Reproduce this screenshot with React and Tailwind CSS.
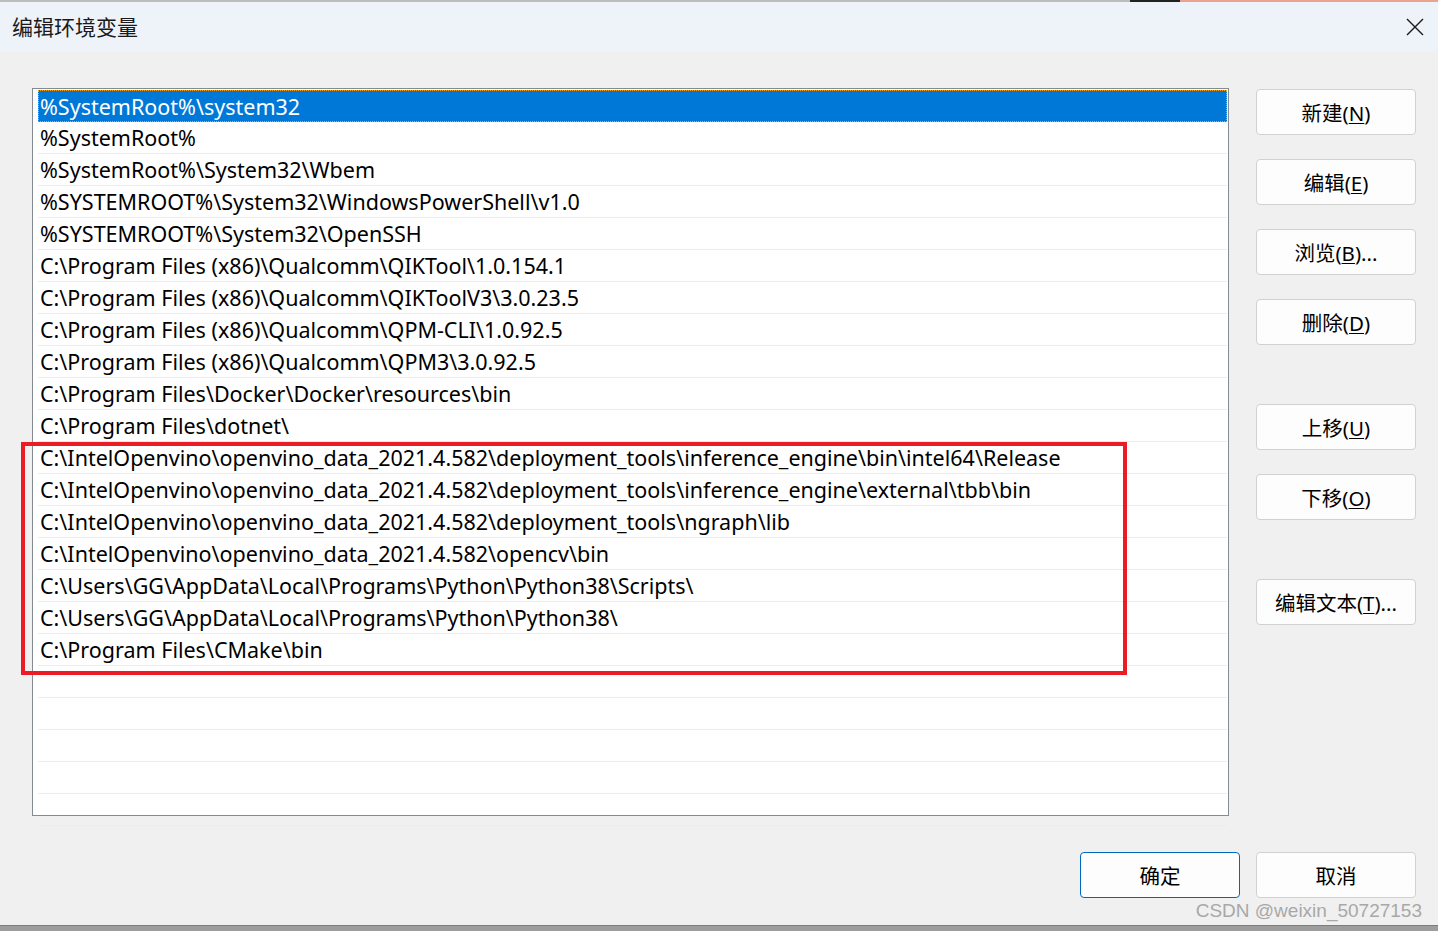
import React from 'react'

const paths = [
  '%SystemRoot%\\system32',
  '%SystemRoot%',
  '%SystemRoot%\\System32\\Wbem',
  '%SYSTEMROOT%\\System32\\WindowsPowerShell\\v1.0',
  '%SYSTEMROOT%\\System32\\OpenSSH',
  'C:\\Program Files (x86)\\Qualcomm\\QIKTool\\1.0.154.1',
  'C:\\Program Files (x86)\\Qualcomm\\QIKToolV3\\3.0.23.5',
  'C:\\Program Files (x86)\\Qualcomm\\QPM-CLI\\1.0.92.5',
  'C:\\Program Files (x86)\\Qualcomm\\QPM3\\3.0.92.5',
  'C:\\Program Files\\Docker\\Docker\\resources\\bin',
  'C:\\Program Files\\dotnet\\',
  'C:\\IntelOpenvino\\openvino_data_2021.4.582\\deployment_tools\\inference_engine\\bin\\intel64\\Release',
  'C:\\IntelOpenvino\\openvino_data_2021.4.582\\deployment_tools\\inference_engine\\external\\tbb\\bin',
  'C:\\IntelOpenvino\\openvino_data_2021.4.582\\deployment_tools\\ngraph\\lib',
  'C:\\IntelOpenvino\\openvino_data_2021.4.582\\opencv\\bin',
  'C:\\Users\\GG\\AppData\\Local\\Programs\\Python\\Python38\\Scripts\\',
  'C:\\Users\\GG\\AppData\\Local\\Programs\\Python\\Python38\\',
  'C:\\Program Files\\CMake\\bin',
  '', '', '', '', '',
]

const FONT = "font-['Noto_Sans','Noto_Sans_CJK_SC',sans-serif]"

function WinButton({ label, hotkey, suffix = '', primary }) {
  return (
    <button
      className={`w-[160px] h-[46px] rounded-[4px] bg-[#fdfdfd] text-[20.5px] text-black leading-none flex items-center justify-center pt-[2px] ${
        primary ? 'border border-[#0067c0]' : 'border border-[#d1d1d1]'
      }`}
    >
      <span>{label}</span>
      {hotkey && (
        <span>
          (<span className="underline underline-offset-2 decoration-1">{hotkey}</span>){suffix}
        </span>
      )}
    </button>
  )
}

export default function App() {
  return (
    <div className={`w-[1438px] h-[931px] flex flex-col bg-[#f0f0f0] overflow-hidden ${FONT}`}>
      {/* edge of whatever is behind the dialog */}
      <div className="h-[2px] flex shrink-0">
        <div className="flex-1 bg-[#bdbdbd]" />
        <div className="w-[50px] bg-[#222]" />
        <div className="w-[258px] bg-[#e9a38f]" />
      </div>

      <div className="h-[50px] shrink-0 bg-[#eef2f9] flex items-center justify-between pl-[12px] pr-[14px]">
        <div className="text-[21px] text-[#1a1a1a] font-['Noto_Sans_CJK_SC',sans-serif]">编辑环境变量</div>
        <svg width="18" height="18" viewBox="0 0 18 18" className="text-[#1a1a1a]">
          <path d="M1 1 L17 17 M17 1 L1 17" stroke="currentColor" strokeWidth="1.4" />
        </svg>
      </div>

      <div className="flex flex-1 pt-[36px] pl-[32px] pr-[22px]">
        <div className="w-[1197px] h-[728px] border border-[#858b93] bg-white pt-[1px] pl-[5px] pr-[1px] relative">
          {paths.map((p, i) => (
            <div
              key={i}
              className={`h-[32px] pl-[2px] pt-[2px] flex items-center text-[21.5px] whitespace-nowrap ${
                i === 0
                  ? 'bg-[#0078d7] text-white outline-1 outline-dotted outline-[#f5a623] -outline-offset-1'
                  : 'text-black border-b border-[#ececec]'
              }`}
            >
              {p}
            </div>
          ))}
          {/* annotation box */}
          <div className="absolute left-[-12px] top-[353px] w-[1106px] h-[233px] border-[4px] border-[#ec1c24] pointer-events-none" />
        </div>

        <div className="ml-[27px] flex flex-col pt-[1px]">
          <div className="flex flex-col gap-[24px]">
            <WinButton label="新建" hotkey="N" />
            <WinButton label="编辑" hotkey="E" />
            <WinButton label="浏览" hotkey="B" suffix="..." />
            <WinButton label="删除" hotkey="D" />
          </div>
          <div className="flex flex-col gap-[24px] mt-[59px]">
            <WinButton label="上移" hotkey="U" />
            <WinButton label="下移" hotkey="O" />
          </div>
          <div className="mt-[59px]">
            <WinButton label="编辑文本" hotkey="T" suffix="..." />
          </div>
        </div>
      </div>

      <div className="flex justify-end gap-[16px] pr-[22px] pb-[27px] relative">
        <WinButton label="确定" primary />
        <WinButton label="取消" />
        <div className="absolute right-[16px] bottom-[0px] text-[19px] text-[#a8a8a8] font-['Liberation_Sans',sans-serif]">
          CSDN @weixin_50727153
        </div>
      </div>

      <div className="h-[6px] shrink-0 bg-[#9d9d9d] border-t border-[#7c7c7c]" />
    </div>
  )
}
